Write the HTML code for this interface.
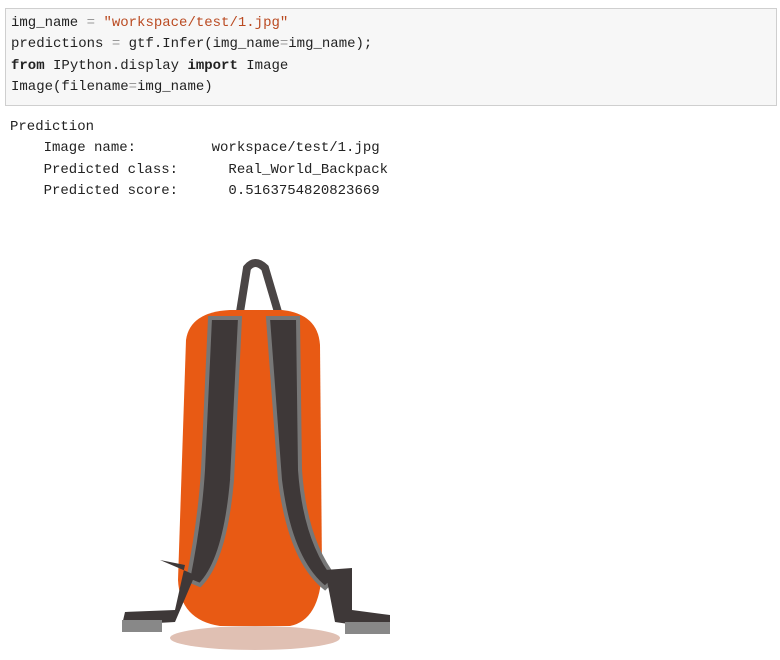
<!DOCTYPE html>
<html><head><style>
body{margin:0;width:780px;height:660px;background:#fff;overflow:hidden;position:relative;font-family:"DejaVu Sans Mono","Liberation Mono",monospace;}
.cell{position:absolute;left:5px;top:8px;width:772px;height:98px;background:#f7f7f7;border:1px solid #cfcfcf;box-sizing:border-box;}
pre{margin:0;font-family:"Liberation Mono",monospace;font-size:14px;line-height:21.3px;color:#222;}
.code{position:absolute;left:5px;top:4px;}
.s{color:#ba4a21}.o{color:#999}.k{font-weight:bold;color:#222}
.out{position:absolute;left:10px;top:117px;}
svg{position:absolute;left:0;top:0;}
</style></head><body>
<div class="cell"><pre class="code">img_name <span class="o">=</span> <span class="s">"workspace/test/1.jpg"</span>
predictions <span class="o">=</span> gtf.Infer(img_name<span class="o">=</span>img_name);
<span class="k">from</span> IPython.display <span class="k">import</span> Image
Image(filename<span class="o">=</span>img_name)</pre></div>
<pre class="out">Prediction
    Image name:         workspace/test/1.jpg
    Predicted class:      Real_World_Backpack
    Predicted score:      0.5163754820823669</pre>
<svg width="780" height="660" viewBox="0 0 780 660">
<ellipse cx="255" cy="638" rx="85" ry="12" fill="#d8b0a0" opacity="0.8"/>
<path d="M240 312 L247 268 Q255 258 265 268 L278 312" fill="none" stroke="#4a4545" stroke-width="8"/>
<path d="M186 340 Q190 312 230 310 L282 310 Q318 314 320 345 L322 570 Q320 620 290 626 L220 626 Q180 620 178 580 Z" fill="#e85a14"/>
<path d="M210 318 L240 318 L232 480 Q225 560 200 585 L188 580 Q200 520 203 470 Z" fill="#3e3838" stroke="#777" stroke-width="4"/>
<path d="M268 318 L298 318 L300 470 Q305 540 335 578 L325 588 Q290 560 280 480 Z" fill="#3e3838" stroke="#777" stroke-width="4"/>
<path d="M160 560 L185 565 L175 610 L125 612 L122 625 L175 622 L195 575" fill="#3e3838"/>
<path d="M325 570 L352 568 L352 610 L390 615 L390 630 L335 622 Z" fill="#3e3838"/>
<rect x="122" y="620" width="40" height="12" fill="#888"/>
<rect x="345" y="622" width="45" height="12" fill="#888"/>
</svg>
</body></html>
